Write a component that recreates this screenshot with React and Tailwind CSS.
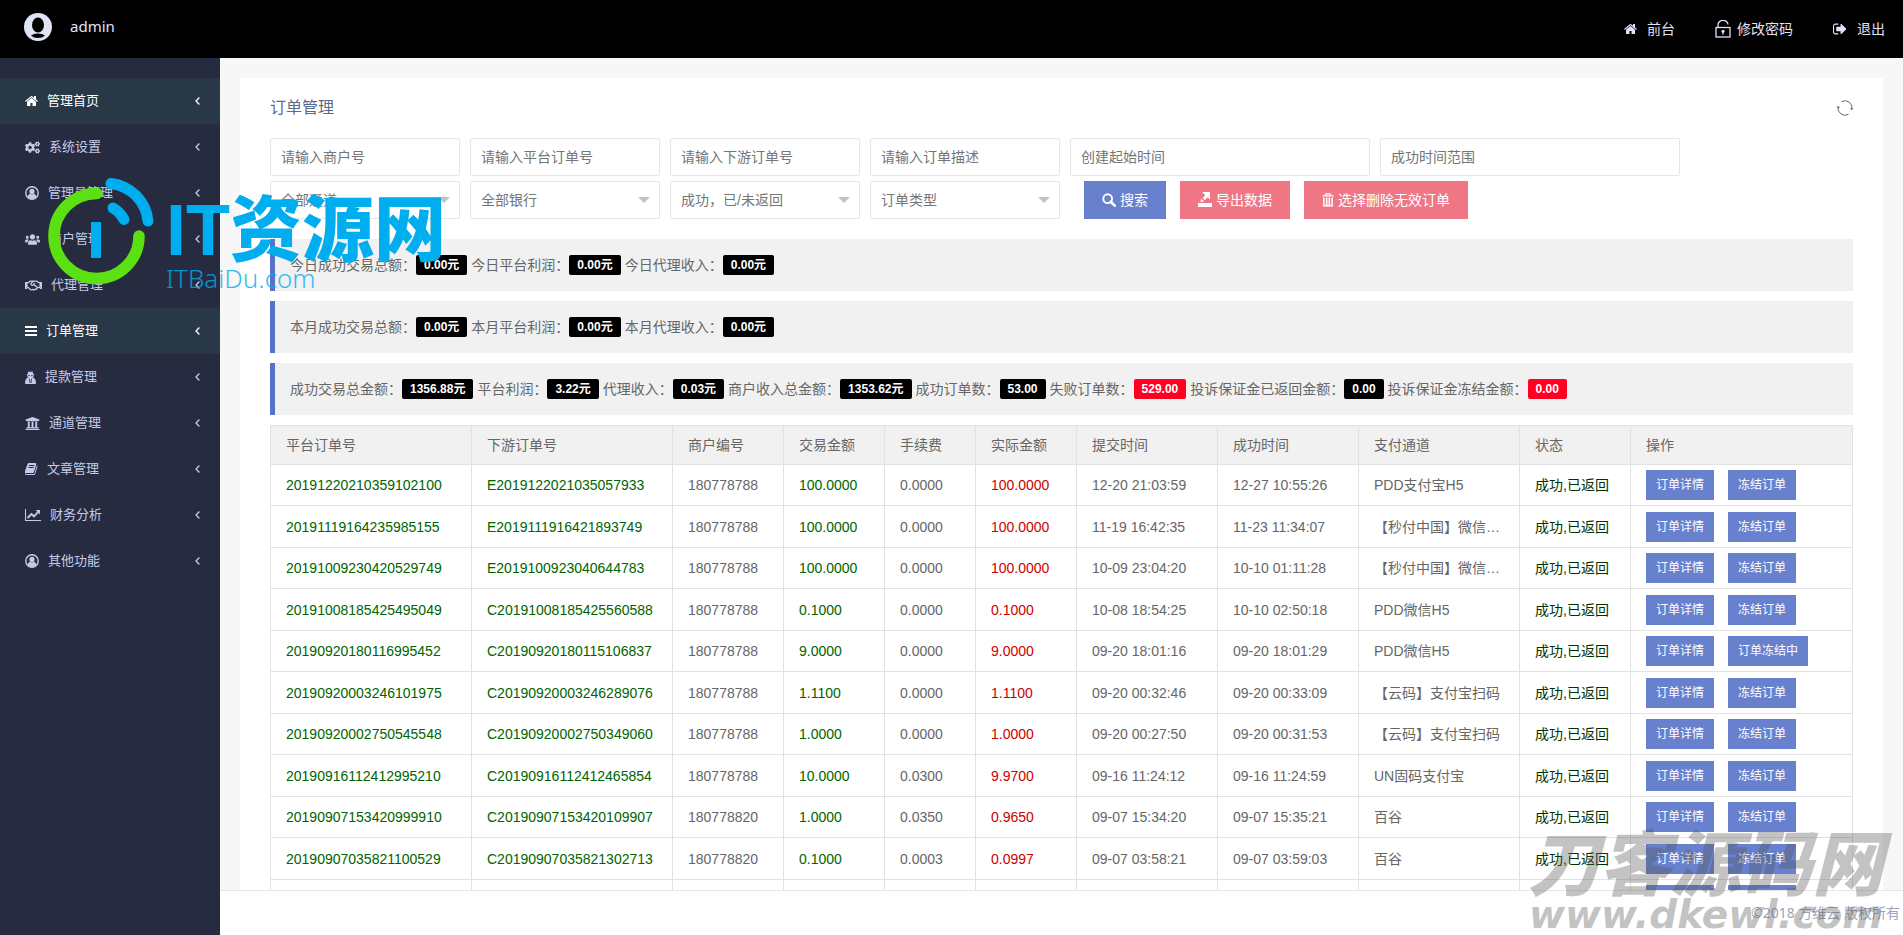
import React, { useState } from 'react';
import { FaCogs, FaRegHandshake, FaUniversity, FaUsers } from 'react-icons/fa';

function HomeIcon({ className }) {
  return (
    <svg viewBox="64 200 1664 1400" fill="currentColor" className={className} aria-hidden="true">
      <path d="M1472 992v480q0 26-19 45t-45 19h-384v-384h-256v384h-384q-26 0-45-19t-19-45v-480q0-1 .5-3t.5-3l575-474 575 474q1 2 1 6zm223-69l-62 74q-8 9-21 11h-3q-13 0-21-7l-692-577-692 577q-12 8-24 7-13-2-21-11l-62-74q-8-10-7-23.500t11-21.500l719-599q32-26 76-26t76 26l244 204v-195q0-14 9-23t23-9h192q14 0 23 9t9 23v408l219 182q10 8 11 21.500t-7 23.500z" />
    </svg>
  );
}

function BookIcon({ className }) {
  return (
    <svg viewBox="64 128 1664 1536" fill="currentColor" className={className} aria-hidden="true">
      <path d="M1639 478q40 57 18 129l-275 906q-19 64-76.500 107.500t-122.500 43.500h-923q-77 0-148.500-53.500t-99.500-131.500q-24-67-2-127 0-4 3-27t4-37q1-8-3-21.500t-3-19.500q2-11 8-21t16.500-23.500 16.500-23.500q23-38 45-91.500t30-91.500q3-10 .5-30t-.5-28q3-11 17-28t17-23q21-36 42-92t25-90q1-9-2.500-32t.5-28q4-13 22-30.500t22-22.500q19-26 42.500-84.500t27.500-96.500q1-8-3-25.500t-2-26.500q2-8 9-18t18-23 17-21q8-12 16.500-30.500t15-35 16-36 19.500-32 26.500-23.500 36-11.500 47.500 5.500l-1 3q38-9 51-9h761q74 0 114 56t18 130l-274 906q-36 119-71.500 153.500t-128.500 34.500h-869q-27 0-38 15-11 16-1 43 24 70 144 70h923q29 0 56-15.500t35-41.500l300-987q7-22 5-57 38 15 59 43zm-1064 2q-4 13 2 22.500t20 9.500h608q13 0 25.500-9.500t16.500-22.500l21-64q4-13-2-22.500t-20-9.500h-608q-13 0-25.500 9.500t-16.500 22.500zm-83 256q-4 13 2 22.500t20 9.500h608q13 0 25.500-9.500t16.500-22.500l21-64q4-13-2-22.500t-20-9.500h-608q-13 0-25.500 9.500t-16.500 22.500z" />
    </svg>
  );
}

function SignOutIcon({ className }) {
  return (
    <svg viewBox="64 192 1664 1408" fill="currentColor" className={className} aria-hidden="true">
      <path d="M704 1440q0 4 1 20t.5 26.500-3 23.500-10 19.500-20.500 6.500h-320q-119 0-203.500-84.500t-84.500-203.500v-704q0-119 84.500-203.500t203.500-84.500h320q13 0 22.500 9.500t9.500 22.500q0 4 1 20t.5 26.500-3 23.500-10 19.500-20.500 6.500h-320q-66 0-113 47t-47 113v704q0 66 47 113t113 47h312l11.500 1 11.500 3 8 5.500 7 9 2 13.500zm928-544q0 26-19 45l-544 544q-19 19-45 19t-45-19-19-45v-288h-448q-26 0-45-19t-19-45v-384q0-26 19-45t45-19h448v-288q0-26 19-45t45-19 45 19l544 544q19 19 19 45z" />
    </svg>
  );
}

function UserCircleIcon({ className }) {
  return (
    <svg viewBox="0 0 14 14" fill="none" className={className} aria-hidden="true">
      <circle cx="7" cy="7" r="6.200" stroke="currentColor" strokeWidth="1.400" />
      <circle cx="7" cy="5.400" r="2.600" fill="currentColor" />
      <path d="M2.600 11C2.900 8.900 4 7.900 5 7.700Q7 9 9 7.700C10 7.900 11.100 8.900 11.400 11Q9.500 13.200 7 13.200T2.600 11Z" fill="currentColor" />
    </svg>
  );
}

function BarsIcon({ className }) {
  return (
    <svg viewBox="0 0 12 10" fill="currentColor" className={className} aria-hidden="true">
      <path d="M0 0h12v2H0zM0 4h12v2H0zM0 8h12v2H0z" />
    </svg>
  );
}

function SecretIcon({ className }) {
  return (
    <svg viewBox="0 0 11 13" className={className} aria-hidden="true">
      <path d="M3.400.4Q5.500 1.200 7.600.4L8.300 3 9.500 3.700 8.600 4.600Q8.600 6 8 6.600 10.800 7.400 11 12.400L10.200 13H.8L0 12.400Q.2 7.400 3 6.600 2.400 6 2.400 4.600L1.500 3.700 2.700 3Z" fill="currentColor" />
      <path d="M3.200 4.600h1.800M6 4.600h1.800M4.300 7.600l.8 4.400M6.700 7.600l-.8 4.400" stroke="#272b40" strokeWidth=".8" />
    </svg>
  );
}

function LineChartIcon({ className }) {
  return (
    <svg viewBox="0 0 16 12" fill="none" stroke="currentColor" className={className} aria-hidden="true">
      <path d="M.5 0v11.500H16" strokeWidth="1.100" />
      <path d="M2.500 9l4-4 2.500 2.300 4-4.200" strokeWidth="1.900" />
      <path d="M10.600 1H15v4.400z" fill="currentColor" stroke="none" />
    </svg>
  );
}

function AngleLeftIcon({ className }) {
  return (
    <svg viewBox="0 0 5 8" fill="none" stroke="currentColor" strokeWidth="1.300" className={className} aria-hidden="true">
      <path d="M4.400.5L1 4l3.400 3.500" />
    </svg>
  );
}

function UnlockIcon({ className }) {
  return (
    <svg viewBox="0 0 16 18" fill="none" stroke="currentColor" strokeWidth="1.3" className={className} aria-hidden="true">
      <rect x="1" y="7.500" width="14" height="9.500" />
      <path d="M3 7.500V5.500A5 4.700 0 0 1 13 4.500" />
      <circle cx="8" cy="11.300" r="1.500" fill="currentColor" stroke="none" />
      <path d="M8 11.500V14.500" />
    </svg>
  );
}

function AvatarIcon({ className }) {
  return (
    <svg viewBox="0 0 28 28" className={className} aria-hidden="true">
      <circle cx="14" cy="14" r="14" fill="#e0e2f6" />
      <ellipse cx="14" cy="12" rx="6" ry="7.500" fill="#000" />
      <path d="M7 22.500Q9.500 20.500 14 20.500T21 22.500Q18.500 25 14 25T7 22.500Z" fill="#000" />
    </svg>
  );
}

function RefreshIcon({ className }) {
  return (
    <svg viewBox="0 0 16 16" fill="none" stroke="currentColor" strokeWidth="1" className={className} aria-hidden="true">
      <path d="M4.500 1.700A7 7 0 0 1 14.800 9.500" />
      <path d="M11.500 14.300A7 7 0 0 1 1.200 6.500" />
      <path d="M13.500 8.300l1.300 1.500.8-1.500M2.500 7.700L1.200 6.200l-.8 1.500" />
    </svg>
  );
}

function SearchIcon({ className }) {
  return (
    <svg viewBox="0 0 16 16" fill="none" stroke="currentColor" className={className} aria-hidden="true">
      <circle cx="6.500" cy="6.500" r="5" strokeWidth="2.200" />
      <path d="M10 10l4.500 4.500" strokeWidth="3" strokeLinecap="round" />
    </svg>
  );
}

function ExportIcon({ className }) {
  return (
    <svg viewBox="0 0 14 16" fill="currentColor" className={className} aria-hidden="true">
      <path d="M0 11h14v4H0zM4 0h8v7.500L9.700 5.300 6.800 8.200 4.600 6 7.300 3.200z" />
      <path d="M3 6.500l3 3-3.500.5z" />
    </svg>
  );
}

function TrashIcon({ className }) {
  return (
    <svg viewBox="0 0 14 16" fill="none" stroke="currentColor" className={className} aria-hidden="true">
      <path d="M.5 3.200h13M4.500 3V.8h5V3" strokeWidth="1.500" />
      <path d="M2.200 5v9.700h9.600V5M5.500 5v9.500M8.500 5v9.500" strokeWidth="1.800" />
    </svg>
  );
}

const menu = [
  { label: '管理首页', icon: HomeIcon, size: 'h-3 w-[13px]', active: true },
  { label: '系统设置', icon: FaCogs, size: 'h-[15px] w-[15px]' },
  { label: '管理员管理', icon: UserCircleIcon, size: 'h-[14px] w-[14px]' },
  { label: '商户管理', icon: FaUsers, size: 'h-[15px] w-[15px]' },
  { label: '代理管理', icon: FaRegHandshake, size: 'h-[17px] w-[17px]' },
  { label: '订单管理', icon: BarsIcon, size: 'h-[10px] w-3', active: true },
  { label: '提款管理', icon: SecretIcon, size: 'h-[13px] w-[11px]' },
  { label: '通道管理', icon: FaUniversity, size: 'h-[15px] w-[15px]' },
  { label: '文章管理', icon: BookIcon, size: 'h-3 w-[13px]' },
  { label: '财务分析', icon: LineChartIcon, size: 'h-3 w-4' },
  { label: '其他功能', icon: UserCircleIcon, size: 'h-[14px] w-[14px]' },
];

const textFilters = ['请输入商户号', '请输入平台订单号', '请输入下游订单号', '请输入订单描述'];
const dateFilters = ['创建起始时间', '成功时间范围'];
const selectFilters = [
  { label: '通道', value: '全部通道' },
  { label: '银行', value: '全部银行' },
  { label: '订单状态', value: '成功，已/未返回' },
  { label: '类型', value: '订单类型' },
];

const stats = [
  [
    { label: '今日成功交易总额：', value: '0.00元' },
    { label: '今日平台利润：', value: '0.00元' },
    { label: '今日代理收入：', value: '0.00元' },
  ],
  [
    { label: '本月成功交易总额：', value: '0.00元' },
    { label: '本月平台利润：', value: '0.00元' },
    { label: '本月代理收入：', value: '0.00元' },
  ],
  [
    { label: '成功交易总金额：', value: '1356.88元' },
    { label: '平台利润：', value: '3.22元' },
    { label: '代理收入：', value: '0.03元' },
    { label: '商户收入总金额：', value: '1353.62元' },
    { label: '成功订单数：', value: '53.00' },
    { label: '失败订单数：', value: '529.00', red: true },
    { label: '投诉保证金已返回金额：', value: '0.00' },
    { label: '投诉保证金冻结金额：', value: '0.00', red: true },
  ],
];

const columns = [
  { title: '平台订单号', width: 'w-[201px]' },
  { title: '下游订单号', width: 'w-[201px]' },
  { title: '商户编号', width: 'w-[111px]' },
  { title: '交易金额', width: 'w-[101px]' },
  { title: '手续费', width: 'w-[91px]' },
  { title: '实际金额', width: 'w-[101px]' },
  { title: '提交时间', width: 'w-[141px]' },
  { title: '成功时间', width: 'w-[141px]' },
  { title: '支付通道', width: 'w-[161px]' },
  { title: '状态', width: 'w-[111px]' },
  { title: '操作', width: '' },
];

const orders = [
  { id: '20191220210359102100', sub: 'E2019122021035057933', shop: '180778788', amount: '100.0000', fee: '0.0000', real: '100.0000', created: '12-20 21:03:59', paid: '12-27 10:55:26', channel: 'PDD支付宝H5' },
  { id: '20191119164235985155', sub: 'E2019111916421893749', shop: '180778788', amount: '100.0000', fee: '0.0000', real: '100.0000', created: '11-19 16:42:35', paid: '11-23 11:34:07', channel: '【秒付中国】微信扫码' },
  { id: '20191009230420529749', sub: 'E2019100923040644783', shop: '180778788', amount: '100.0000', fee: '0.0000', real: '100.0000', created: '10-09 23:04:20', paid: '10-10 01:11:28', channel: '【秒付中国】微信扫码' },
  { id: '20191008185425495049', sub: 'C20191008185425560588', shop: '180778788', amount: '0.1000', fee: '0.0000', real: '0.1000', created: '10-08 18:54:25', paid: '10-10 02:50:18', channel: 'PDD微信H5' },
  { id: '20190920180116995452', sub: 'C20190920180115106837', shop: '180778788', amount: '9.0000', fee: '0.0000', real: '9.0000', created: '09-20 18:01:16', paid: '09-20 18:01:29', channel: 'PDD微信H5', frozen: true },
  { id: '20190920003246101975', sub: 'C20190920003246289076', shop: '180778788', amount: '1.1100', fee: '0.0000', real: '1.1100', created: '09-20 00:32:46', paid: '09-20 00:33:09', channel: '【云码】支付宝扫码' },
  { id: '20190920002750545548', sub: 'C20190920002750349060', shop: '180778788', amount: '1.0000', fee: '0.0000', real: '1.0000', created: '09-20 00:27:50', paid: '09-20 00:31:53', channel: '【云码】支付宝扫码' },
  { id: '20190916112412995210', sub: 'C20190916112412465854', shop: '180778788', amount: '10.0000', fee: '0.0300', real: '9.9700', created: '09-16 11:24:12', paid: '09-16 11:24:59', channel: 'UN固码支付宝' },
  { id: '20190907153420999910', sub: 'C20190907153420109907', shop: '180778820', amount: '1.0000', fee: '0.0350', real: '0.9650', created: '09-07 15:34:20', paid: '09-07 15:35:21', channel: '百谷' },
  { id: '20190907035821100529', sub: 'C20190907035821302713', shop: '180778820', amount: '0.1000', fee: '0.0003', real: '0.0997', created: '09-07 03:58:21', paid: '09-07 03:59:03', channel: '百谷' },
];

const cell = 'border border-[#e2e2e2] px-[15px] truncate';

function Header() {
  return (
    <header className="flex h-[58px] shrink-0 items-center justify-between bg-black pr-[18px] pl-6 text-sm text-[#e0e2f6]">
      <div className="flex items-center gap-[18px] pb-1">
        <AvatarIcon className="h-7 w-7" />
        <span className="font-['Noto_Sans',sans-serif] text-[15px]">admin</span>
      </div>
      <nav className="flex items-center gap-10">
        <a href="#front" className="flex items-center gap-[10px]">
          <HomeIcon className="h-3 w-[13px]" />
          前台
        </a>
        <a href="#password" className="flex items-center gap-[6px]">
          <UnlockIcon className="h-[18px] w-4" />
          修改密码
        </a>
        <a href="#logout" className="flex items-center gap-[10px]">
          <SignOutIcon className="h-3 w-[14px]" />
          退出
        </a>
      </nav>
    </header>
  );
}

function Sidebar() {
  return (
    <aside className="w-[220px] shrink-0 bg-[#272b40] pt-5">
      <ul>
        {menu.map(({ label, icon: Icon, size, active }) => (
          <li key={label}>
            <a
              href={`#${label}`}
              className={`flex h-[46px] items-center gap-[9px] pr-5 pl-[25px] text-[13px] ${
                active ? 'bg-[#293846] text-white' : 'text-[#c5cae9]'
              }`}
            >
              <Icon className={size} />
              <span className="flex-1">{label}</span>
              <AngleLeftIcon className="h-2 w-[5px]" />
            </a>
          </li>
        ))}
      </ul>
    </aside>
  );
}

function Filters() {
  const field = 'h-[38px] rounded-xs border border-[#e6e6e6] bg-white px-[10px] text-[#757575] text-sm outline-none placeholder:text-[#757575]';

  return (
    <form className="space-y-[5px]" onSubmit={(e) => e.preventDefault()}>
      <div className="flex flex-wrap gap-[10px]">
        {textFilters.map((label) => (
          <input key={label} type="text" aria-label={label} placeholder={label} className={`${field} w-[190px]`} />
        ))}
        {dateFilters.map((label) => (
          <input key={label} type="text" aria-label={label} placeholder={label} className={`${field} w-[300px]`} />
        ))}
      </div>
      <div className="flex flex-wrap gap-[10px]">
        {selectFilters.map(({ label, value }) => (
          <div key={label} className="relative">
            <select aria-label={label} className={`${field} w-[190px] appearance-none`}>
              <option>{value}</option>
            </select>
            <span className="pointer-events-none absolute top-4 right-[10px] border-x-6 border-t-6 border-x-transparent border-t-[#c2c2c2]" />
          </div>
        ))}
        <div className="flex gap-[14px] pl-[14px] text-sm text-white">
          <button type="submit" className="flex h-[38px] items-center gap-1 bg-[#6881ce] px-[18px]">
            <SearchIcon className="h-[14px] w-[14px]" />
            搜索
          </button>
          <button type="button" className="flex h-[38px] items-center gap-1 bg-[#ef7785] px-[18px]">
            <ExportIcon className="h-4 w-[14px]" />
            导出数据
          </button>
          <button type="button" className="flex h-[38px] items-center gap-1 bg-[#ef7785] px-[18px]">
            <TrashIcon className="h-4 w-3" />
            选择删除无效订单
          </button>
        </div>
      </div>
    </form>
  );
}

function StatBar({ items }) {
  return (
    <div className="flex min-h-[52px] flex-wrap items-center gap-1 border-l-5 border-[#5872c8] bg-[#f1f1f1] pl-[15px] text-sm text-[#666]">
      {items.map(({ label, value, red }) => (
        <div key={label} className="flex items-center">
          <span>{label}</span>
          <b className={`rounded-xs px-2 text-xs leading-5 text-white ${red ? 'bg-[#ff0022]' : 'bg-black'}`}>
            {value}
          </b>
        </div>
      ))}
    </div>
  );
}

function OrderTable({ rows }) {
  const action = 'h-[30px] bg-[#6881ce] px-[10px] text-xs text-white';

  return (
    <table className="w-full table-fixed border-collapse text-left text-sm text-[#666]">
      <thead>
        <tr className="h-[39px] bg-[#f1f1f1]">
          {columns.map(({ title, width }) => (
            <th key={title} className={`${cell} ${width} font-normal`}>
              {title}
            </th>
          ))}
        </tr>
      </thead>
      <tbody>
        {rows.map((row, i) => (
          <tr key={i} className="odd:h-[41px] even:h-[42px]">
            <td className={`${cell} text-[#006400]`}>{row.id}</td>
            <td className={`${cell} text-[#006400]`}>{row.sub}</td>
            <td className={cell}>{row.shop}</td>
            <td className={`${cell} text-[#006400]`}>{row.amount}</td>
            <td className={cell}>{row.fee}</td>
            <td className={`${cell} text-[#cc0000]`}>{row.real}</td>
            <td className={cell}>{row.created}</td>
            <td className={cell}>{row.paid}</td>
            <td className={cell}>{row.channel}</td>
            <td className={`${cell} text-[#003300]`}>成功,已返回</td>
            <td className={cell}>
              <div className="flex gap-[14px]">
                <button type="button" className={action}>订单详情</button>
                <button type="button" className={action}>{row.frozen ? '订单冻结中' : '冻结订单'}</button>
              </div>
            </td>
          </tr>
        ))}
      </tbody>
    </table>
  );
}

function SiteStamp() {
  return (
    <div className="pointer-events-none absolute top-[178px] left-[48px] flex items-start text-[#00adee]">
      <svg viewBox="48 178 106 110" className="h-[110px] w-[106px]" fill="none" strokeLinecap="round" aria-hidden="true">
        <path d="M97 193.500A42.500 42.500 0 1 0 139 236" stroke="#5be012" strokeWidth="11.500" />
        <path d="M111 183.500A42 42 0 0 1 148 221" stroke="#00adee" strokeWidth="11" />
        <path d="M113 208Q120 212 124 219.500" stroke="#00adee" strokeWidth="11" />
        <rect x="91" y="222" width="10" height="36" fill="#00adee" />
      </svg>
      <div className="pt-4 pl-3">
        <p className="text-[72px] leading-[72px] font-black whitespace-nowrap">IT资源网</p>
        <p className="font-['Noto_Sans','Noto_Sans_CJK_SC',sans-serif] text-[26px] leading-[24px] font-light opacity-80">ITBaiDu.com</p>
      </div>
    </div>
  );
}

function CornerStamp() {
  return (
    <div className="pointer-events-none absolute right-5 bottom-0 flex flex-col items-end font-bold whitespace-nowrap text-[#555] italic opacity-35">
      <p className="text-[71px] leading-[58px] font-black">刀客源码网</p>
      <p className="font-['DejaVu_Sans',sans-serif] text-[39px] leading-[40px]">www.dkewl.com</p>
    </div>
  );
}

export default function App() {
  // The last visible row is cut off by the footer
  const [rows] = useState([...orders, orders[9]]);

  return (
    <div className="relative flex h-screen flex-col overflow-hidden font-['Liberation_Sans','Noto_Sans_CJK_SC',sans-serif]">
      <Header />
      <div className="flex min-h-0 flex-1">
        <Sidebar />
        <div className="flex min-w-0 flex-1 flex-col">
          <main className="min-h-0 flex-1 overflow-hidden bg-[#f7f7f7] px-5 pt-5">
            <section className="bg-white px-[30px] pb-8">
              <div className="flex h-[60px] items-center justify-between text-[#5a6a8c]">
                <h1 className="text-base">订单管理</h1>
                <button type="button" aria-label="刷新" className="text-[#666]">
                  <RefreshIcon className="h-4 w-4" />
                </button>
              </div>
              <Filters />
              <div className="mt-5 mb-[10px] space-y-[10px]">
                {stats.map((items) => (
                  <StatBar key={items[0].label} items={items} />
                ))}
              </div>
              <OrderTable rows={rows} />
            </section>
          </main>
          <footer className="flex h-[45px] shrink-0 items-center justify-end border-t border-[#e6e6e6] bg-white pr-[3px] font-['Noto_Sans','Noto_Sans_CJK_SC',sans-serif] text-sm text-[#9da5b8]">
            ©2018 方维云 版权所有
          </footer>
        </div>
      </div>
      <SiteStamp />
      <CornerStamp />
    </div>
  );
}
